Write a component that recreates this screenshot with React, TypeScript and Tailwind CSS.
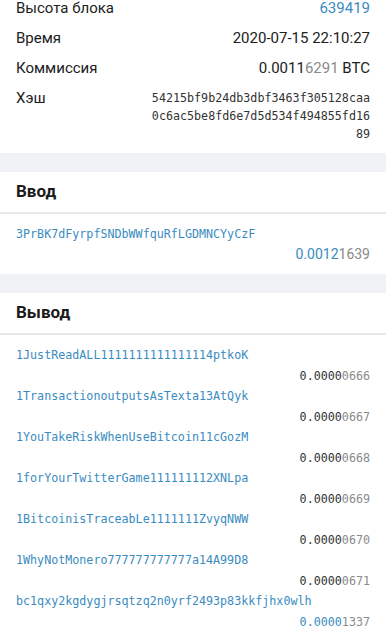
import React from 'react'

const sans = "font-['Roboto','Liberation_Sans',sans-serif]"
const mono = "font-['DejaVu_Sans_Mono','Liberation_Mono',monospace]"

const outputs = [
  { addr: '1JustReadALL1111111111111114ptkoK', head: '0.0000', tail: '0666' },
  { addr: '1TransactionoutputsAsTexta13AtQyk', head: '0.0000', tail: '0667' },
  { addr: '1YouTakeRiskWhenUseBitcoin11cGozM', head: '0.0000', tail: '0668' },
  { addr: '1forYourTwitterGame111111112XNLpa', head: '0.0000', tail: '0669' },
  { addr: '1BitcoinisTraceabLe1111111ZvyqNWW', head: '0.0000', tail: '0670' },
  { addr: '1WhyNotMonero777777777777a14A99D8', head: '0.0000', tail: '0671' },
  { addr: 'bc1qxy2kgdygjrsqtzq2n0yrf2493p83kkfjhx0wlh', head: '0.0000', tail: '1337', change: true },
]

function Row({ label, children }: { label: string; children: React.ReactNode }) {
  return (
    <div className="flex items-center justify-between h-[30px] px-4">
      <span className="text-[15px] text-[#212121]">{label}</span>
      <span className="text-[15px] text-[#212121]">{children}</span>
    </div>
  )
}

function Header({ title }: { title: string }) {
  return (
    <div className="h-[42px] flex items-center px-4 border-b-2 border-[#e6e7ea]">
      <span className="text-[17px] font-bold text-[#1b1b1b]">{title}</span>
    </div>
  )
}

export default function App() {
  return (
    <div className={`w-[386px] h-[640px] overflow-hidden bg-white ${sans}`}>
      <div className="-mt-[7px] pb-[4px]">
        <Row label="Высота блока">
          <span className="text-[#3a8bbf]">639419</span>
        </Row>
        <Row label="Время">2020-07-15 22:10:27</Row>
        <Row label="Коммиссия">
          0.0011<span className="text-[#8a8a8a]">6291</span> BTC
        </Row>
        <div className="flex items-start justify-between px-4 pt-[6px] pb-[6px]">
          <span className="text-[15px] leading-[18px] text-[#212121]">Хэш</span>
          <span className={`w-[220px] text-right break-all text-[11.7px] leading-[18px] text-[#333] ${mono}`}>
            54215bf9b24db3dbf3463f305128caa0c6ac5be8fd6e7d5d534f494855fd1689
          </span>
        </div>
      </div>

      <div className="h-[19px] bg-[#f1f2f6]" />

      <Header title="Ввод" />
      <div className="px-4 pt-[10px] pb-[10px]">
        <div className={`text-[11.7px] leading-[20px] text-[#3a8bbf] ${mono}`}>
          3PrBK7dFyrpfSNDbWWfquRfLGDMNCYyCzF
        </div>
        <div className="text-right text-[14px] leading-[20px]">
          <span className="text-[#3a8bbf]">0.0012</span>
          <span className="text-[#8a8a8a]">1639</span>
        </div>
      </div>

      <div className="h-[19px] bg-[#f1f2f6]" />

      <Header title="Вывод" />
      <div className="px-4 pt-[10px]">
        {outputs.map((o) => (
          <div key={o.addr}>
            <div className={`text-[11.7px] leading-[20.5px] text-[#3a8bbf] ${mono}`}>{o.addr}</div>
            <div className={`text-right text-[11.7px] leading-[20.5px] ${mono}`}>
              <span className={o.change ? 'text-[#3a8bbf]' : 'text-[#333]'}>{o.head}</span>
              <span className="text-[#8a8a8a]">{o.tail}</span>
            </div>
          </div>
        ))}
      </div>
    </div>
  )
}
